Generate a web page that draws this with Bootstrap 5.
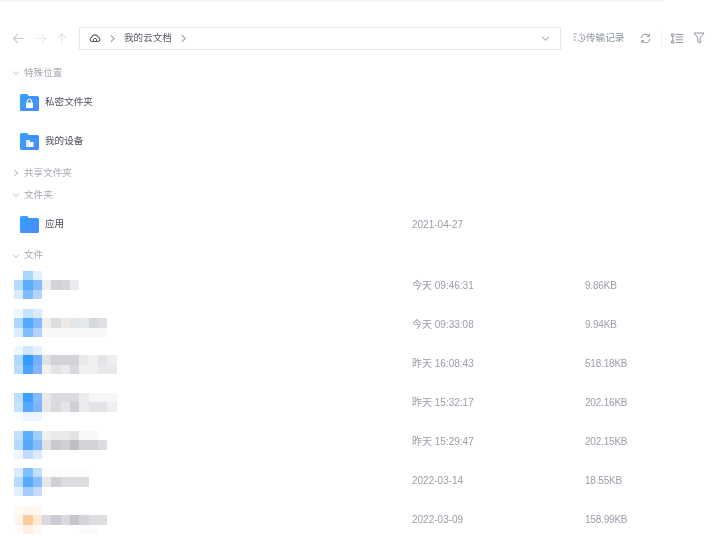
<!DOCTYPE html>
<html lang="zh">
<head>
<meta charset="utf-8">
<title>我的云文档</title>
<link href="https://cdn.jsdelivr.net/npm/bootstrap@5.3.0/dist/css/bootstrap.min.css" rel="stylesheet">
<style>
html,body{height:535px;overflow:hidden;background:#fff}
body{font-family:"Liberation Sans","Noto Sans CJK SC",sans-serif;font-size:10px;color:#9a9ea9}
.fm-page{filter:blur(.55px);width:713px}
.fm-topline{height:3px;width:663px;background:linear-gradient(#f1f1f3,#fff)}
.fm-toolbar{height:59px;padding:24px 0 0 12px;align-items:flex-start}
.fm-nav{width:67px;height:22px;gap:10px;align-items:center}
.fm-path{width:482px;height:23px;border:1px solid #e6e7ec;padding:0 9px;gap:7px;color:#555a66;font-size:9.6px}
.fm-path .fm-end{margin-left:auto}
.fm-tools{height:22px;align-items:center;margin-left:12px;color:#8d93a0;font-size:9.6px}
.fm-sep{width:1px;height:16px;background:#eeeff2;margin:0 9px 0 10px}
.fm-filter{margin-left:10px}
.fm-head{height:22px;padding-left:12px;gap:4px;color:#a4a8b1;font-size:9.6px}
.fm-head-last{height:21px}
.fm-row{height:39px;padding-left:20px;padding-bottom:2px}
.fm-name{width:392px;gap:6px;color:#4b4f59;font-size:9.6px}
.fm-file{height:39px;padding-left:14px}
.fm-thumb{width:398px}
.fm-up1{margin-bottom:2px}
.fm-up2{margin-bottom:4px}
.fm-up4{margin-bottom:8px}
.fm-down4{margin-top:8px}
.fm-down3{margin-top:6px}
.fm-down1{margin-top:2px}
.fm-date{width:173px}
.fm-size{letter-spacing:-.2px}
.fm-folderdate{width:173px}
</style>
</head>
<body>
<svg width="0" height="0" class="position-absolute">
<defs>
<linearGradient id="fg" x1="0" y1="0" x2="1" y2="1"><stop offset="0" stop-color="#38a3ff"/><stop offset="1" stop-color="#4a88ff"/></linearGradient>
<symbol id="fold" viewBox="0 0 19 17"><path d="M1.5 0H7l2 2h8.5A1.5 1.5 0 0 1 19 3.500V15.500A1.500 1.500 0 0 1 17.500 17H1.500A1.500 1.500 0 0 1 0 15.500V1.500A1.500 1.500 0 0 1 1.500 0Z" fill="url(#fg)"/><path d="M0 4H19" stroke="#1e78e6" stroke-width=".7" opacity=".55"/></symbol>
<symbol id="chd" viewBox="0 0 8 8"><path d="M1 2.500 4 5.500 7 2.500" fill="none" stroke="#b3b7c0" stroke-width="1"/></symbol>
<symbol id="chr" viewBox="0 0 8 8"><path d="M2.500 1 5.500 4 2.500 7" fill="none" stroke="#9fa4ae" stroke-width="1"/></symbol>
</defs>
</svg>
<div class="fm-page">
  <div class="fm-topline"></div>
  <div class="fm-toolbar d-flex">
    <div class="fm-nav d-flex">
      <svg width="13" height="13" viewBox="0 0 13 13"><path d="M12 6.500H1.500M6 2 1.500 6.500 6 11" fill="none" stroke="#c3cbe0" stroke-width="1.100"/></svg>
      <svg width="12" height="13" viewBox="0 0 13 13"><path d="M1 6.500H11.500M7 2l4.500 4.500L7 11" fill="none" stroke="#e6e9f1" stroke-width="1.100"/></svg>
      <svg width="10" height="13" viewBox="0 0 13 13" preserveAspectRatio="none"><path d="M6.500 12V1.500M2 6l4.500-4.500L11 6" fill="none" stroke="#dfe3ec" stroke-width="1.100"/></svg>
    </div>
    <div class="fm-path d-flex align-items-center">
      <svg width="12" height="11" viewBox="0 0 12 11"><path d="M3 8.500A2.200 2.200 0 0 1 2.800 4.200 3.300 3.300 0 0 1 9.100 4.200 2.200 2.200 0 0 1 9 8.500H3" fill="none" stroke="#555a66" stroke-width="1.100"/><path d="M6 5 8 7 6 9 4 7Z" fill="#fff" stroke="#555a66"/></svg>
      <svg width="9" height="9"><use href="#chr"/></svg>
      <span>我的云文档</span>
      <svg width="9" height="9"><use href="#chr"/></svg>
      <svg width="11" height="9" viewBox="0 0 8 8" class="fm-end"><use href="#chd"/></svg>
    </div>
    <div class="fm-tools d-flex">
      <svg width="13" height="12" viewBox="0 0 13 12"><path d="M.5 2H4M.5 5H3M.5 8H3M6 3.500a3.500 3.500 0 1 1-.8 4M8.500 4.500V7H10.500" fill="none" stroke="#8d93a0" stroke-width=".9"/></svg>
      <span>传输记录</span>
      <svg width="11" height="11" viewBox="0 0 11 11" class="ms-3"><path d="M1.200 5A4.300 4.300 0 0 1 9 3M9.800 6A4.300 4.300 0 0 1 2 8M9.300.8V3.300H6.900M1.700 10.200V7.700H4.100" fill="none" stroke="#858b98" stroke-width=".9"/></svg>
      <span class="fm-sep"></span>
      <svg width="12" height="11" viewBox="0 0 12 11"><path d="M.6.900h2.200v2.200H.6zM.6 7.900h2.200v2.200H.6zM4.500 1.500H12M4.500 4H12M4.500 6.800H12M4.500 9.500H12M1.700 3.100v4.800" fill="none" stroke="#858b98" stroke-width=".9"/></svg>
      <svg width="12" height="12" viewBox="0 0 12 12" class="fm-filter"><path d="M1 1H11L7.200 6V11L4.800 9.600V6Z" fill="none" stroke="#858b98" stroke-width=".9"/></svg>
    </div>
  </div>

  <div class="fm-head d-flex align-items-center"><svg width="8" height="8"><use href="#chd"/></svg><span>特殊位置</span></div>
  <div class="fm-row d-flex align-items-center">
    <div class="fm-name d-flex align-items-center">
      <svg width="19" height="17" viewBox="0 0 19 17"><use href="#fold"/><path d="M6 8.500h7v5.500H6z" fill="#fff"/><path d="M7.500 8.500V7a2 2 0 0 1 4 0v1.500" fill="none" stroke="#fff"/></svg><span>私密文件夹</span>
    </div>
  </div>
  <div class="fm-row d-flex align-items-center">
    <div class="fm-name d-flex align-items-center">
      <svg width="19" height="17" viewBox="0 0 19 17"><use href="#fold"/><path d="M6 7h4v7H6z" fill="#dbeaff"/><path d="M9 9h4.500v5H9z" fill="#fff"/></svg><span>我的设备</span>
    </div>
  </div>
  <div class="fm-head d-flex align-items-center"><svg width="8" height="8"><use href="#chr"/></svg><span>共享文件夹</span></div>
  <div class="fm-head d-flex align-items-center"><svg width="8" height="8"><use href="#chd"/></svg><span>文件夹</span></div>
  <div class="fm-row d-flex align-items-center">
    <div class="fm-name d-flex align-items-center">
      <svg width="19" height="17" viewBox="0 0 19 17"><use href="#fold"/></svg><span>应用</span>
    </div>
    <span class="fm-folderdate">2021-04-27</span>
  </div>
  <div class="fm-head fm-head-last d-flex align-items-center"><svg width="8" height="8"><use href="#chd"/></svg><span>文件</span></div>

  <div class="fm-file d-flex align-items-center">
    <div class="fm-thumb fm-up1"><svg width="112" height="28" viewBox="0 0 12 3" shape-rendering="crispEdges" class="d-block">
      <rect x="1" y="0" width="1" height="1" fill="#a9d6ff"/><rect x="2" y="0" width="1" height="1" fill="#e3f1ff"/>
      <rect x="0" y="1" width="1" height="1" fill="#b3daff"/><rect x="1" y="1" width="1" height="1" fill="#5dadff"/><rect x="2" y="1" width="1" height="1" fill="#85bbff"/><rect x="3" y="1" width="1" height="1" fill="#eeeeef"/><rect x="4" y="1" width="1" height="1" fill="#d2d3d7"/><rect x="5" y="1" width="1" height="1" fill="#d6d7da"/><rect x="6" y="1" width="1" height="1" fill="#eaebed"/>
      <rect x="0" y="2" width="1" height="1" fill="#d8ebff"/><rect x="1" y="2" width="1" height="1" fill="#7dbcff"/><rect x="2" y="2" width="1" height="1" fill="#b5d3ff"/>
    </svg></div>
    <span class="fm-date">今天 09:46:31</span><span class="fm-size">9.86KB</span>
  </div>
  <div class="fm-file d-flex align-items-center">
    <div class="fm-thumb fm-up2"><svg width="112" height="28" viewBox="0 0 12 3" shape-rendering="crispEdges" class="d-block">
      <rect x="0" y="0" width="1" height="1" fill="#eef6ff"/><rect x="1" y="0" width="1" height="1" fill="#c5e3ff"/><rect x="2" y="0" width="1" height="1" fill="#d8ebff"/>
      <rect x="0" y="1" width="1" height="1" fill="#aed7ff"/><rect x="1" y="1" width="1" height="1" fill="#55a8ff"/><rect x="2" y="1" width="1" height="1" fill="#82bbff"/><rect x="3" y="1" width="1" height="1" fill="#eeeeef"/><rect x="4" y="1" width="1" height="1" fill="#dcdde0"/><rect x="5" y="1" width="1" height="1" fill="#ece8e6"/><rect x="6" y="1" width="1" height="1" fill="#e3e5e9"/><rect x="7" y="1" width="1" height="1" fill="#e7e8ea"/><rect x="8" y="1" width="1" height="1" fill="#d5d8dc"/><rect x="9" y="1" width="1" height="1" fill="#dfe0e3"/>
      <rect x="0" y="2" width="1" height="1" fill="#d8ebff"/><rect x="1" y="2" width="1" height="1" fill="#7cbcff"/><rect x="2" y="2" width="1" height="1" fill="#b2d2ff"/><rect x="3" y="2" width="7" height="1" fill="#f8f8f8"/>
    </svg></div>
    <span class="fm-date">今天 09:33:08</span><span class="fm-size">9.94KB</span>
  </div>
  <div class="fm-file d-flex align-items-center">
    <div class="fm-thumb fm-up4"><svg width="112" height="28" viewBox="0 0 12 3" shape-rendering="crispEdges" class="d-block">
      <rect x="0" y="0" width="1" height="1" fill="#eef6ff"/><rect x="1" y="0" width="1" height="1" fill="#cfe7ff"/><rect x="2" y="0" width="1" height="1" fill="#e3f0ff"/>
      <rect x="0" y="1" width="1" height="1" fill="#b0d9ff"/><rect x="1" y="1" width="1" height="1" fill="#359cff"/><rect x="2" y="1" width="1" height="1" fill="#72b1ff"/><rect x="3" y="1" width="1" height="1" fill="#dfe0e2"/><rect x="4" y="1" width="3" height="1" fill="#d2d3d7"/><rect x="7" y="1" width="1" height="1" fill="#e9eaec"/><rect x="8" y="1" width="1" height="1" fill="#eff0f1"/><rect x="9" y="1" width="1" height="1" fill="#e3e4e7"/><rect x="10" y="1" width="1" height="1" fill="#eeeeef"/>
      <rect x="0" y="2" width="1" height="1" fill="#b9dcff"/><rect x="1" y="2" width="1" height="1" fill="#4ea3ff"/><rect x="2" y="2" width="1" height="1" fill="#82b5ff"/><rect x="3" y="2" width="1" height="1" fill="#f2f2f2"/><rect x="4" y="2" width="1" height="1" fill="#e3e4e6"/><rect x="5" y="2" width="1" height="1" fill="#ebebed"/><rect x="6" y="2" width="1" height="1" fill="#d8d9dc"/><rect x="7" y="2" width="2" height="1" fill="#f0f1f2"/><rect x="9" y="2" width="2" height="1" fill="#e8e9eb"/>
    </svg></div>
    <span class="fm-date">昨天 16:08:43</span><span class="fm-size">518.18KB</span>
  </div>
  <div class="fm-file d-flex align-items-center">
    <div class="fm-thumb fm-down4"><svg width="112" height="28" viewBox="0 0 12 3" shape-rendering="crispEdges" class="d-block">
      <rect x="0" y="0" width="1" height="1" fill="#bcdfff"/><rect x="1" y="0" width="1" height="1" fill="#3e9fff"/><rect x="2" y="0" width="1" height="1" fill="#82bcff"/><rect x="3" y="0" width="1" height="1" fill="#e7e8ea"/><rect x="4" y="0" width="3" height="1" fill="#dadbde"/><rect x="7" y="0" width="1" height="1" fill="#eaebed"/><rect x="8" y="0" width="3" height="1" fill="#f5f6f7"/>
      <rect x="0" y="1" width="1" height="1" fill="#c5e2ff"/><rect x="1" y="1" width="1" height="1" fill="#58a8ff"/><rect x="2" y="1" width="1" height="1" fill="#7fb3ff"/><rect x="3" y="1" width="1" height="1" fill="#e6e7e8"/><rect x="4" y="1" width="1" height="1" fill="#d9dadd"/><rect x="5" y="1" width="1" height="1" fill="#e4e5e7"/><rect x="6" y="1" width="1" height="1" fill="#cfd0d5"/><rect x="7" y="1" width="1" height="1" fill="#ebecee"/><rect x="8" y="1" width="2" height="1" fill="#e3e4e8"/><rect x="10" y="1" width="1" height="1" fill="#eeeff0"/>
      <rect x="0" y="2" width="1" height="1" fill="#fafcff"/><rect x="1" y="2" width="2" height="1" fill="#edf4ff"/>
    </svg></div>
    <span class="fm-date">昨天 15:32:17</span><span class="fm-size">202.16KB</span>
  </div>
  <div class="fm-file d-flex align-items-center">
    <div class="fm-thumb fm-down3"><svg width="112" height="28" viewBox="0 0 12 3" shape-rendering="crispEdges" class="d-block">
      <rect x="0" y="0" width="1" height="1" fill="#c1e1ff"/><rect x="1" y="0" width="1" height="1" fill="#5caeff"/><rect x="2" y="0" width="1" height="1" fill="#a1cfff"/><rect x="3" y="0" width="1" height="1" fill="#f1f1f2"/><rect x="4" y="0" width="2" height="1" fill="#e9eaeb"/><rect x="6" y="0" width="1" height="1" fill="#e2e3e5"/><rect x="7" y="0" width="2" height="1" fill="#f8f8f9"/>
      <rect x="0" y="1" width="1" height="1" fill="#b5dbff"/><rect x="1" y="1" width="1" height="1" fill="#57a8ff"/><rect x="2" y="1" width="1" height="1" fill="#85bbff"/><rect x="3" y="1" width="1" height="1" fill="#e0e1e3"/><rect x="4" y="1" width="1" height="1" fill="#c9cace"/><rect x="5" y="1" width="1" height="1" fill="#d0d1d5"/><rect x="6" y="1" width="1" height="1" fill="#bebfc5"/><rect x="7" y="1" width="2" height="1" fill="#d3d4d8"/><rect x="9" y="1" width="1" height="1" fill="#dcdde0"/>
      <rect x="0" y="2" width="1" height="1" fill="#eef6ff"/><rect x="1" y="2" width="1" height="1" fill="#c0dbff"/><rect x="2" y="2" width="1" height="1" fill="#dde9ff"/>
    </svg></div>
    <span class="fm-date">昨天 15:29:47</span><span class="fm-size">202.15KB</span>
  </div>
  <div class="fm-file d-flex align-items-center">
    <div class="fm-thumb fm-down1"><svg width="112" height="28" viewBox="0 0 12 3" shape-rendering="crispEdges" class="d-block">
      <rect x="0" y="0" width="1" height="1" fill="#d8ecff"/><rect x="1" y="0" width="1" height="1" fill="#7cc0ff"/><rect x="2" y="0" width="1" height="1" fill="#c0dfff"/><rect x="3" y="0" width="5" height="1" fill="#fcfcfc"/>
      <rect x="0" y="1" width="1" height="1" fill="#b5dbff"/><rect x="1" y="1" width="1" height="1" fill="#59a9ff"/><rect x="2" y="1" width="1" height="1" fill="#8abdff"/><rect x="3" y="1" width="1" height="1" fill="#e6e7e9"/><rect x="4" y="1" width="1" height="1" fill="#d0d1d5"/><rect x="5" y="1" width="3" height="1" fill="#dcdde0"/>
      <rect x="0" y="2" width="1" height="1" fill="#e3f0ff"/><rect x="1" y="2" width="1" height="1" fill="#a2cbff"/><rect x="2" y="2" width="1" height="1" fill="#c5dcff"/>
    </svg></div>
    <span class="fm-date">2022-03-14</span><span class="fm-size">18.55KB</span>
  </div>
  <div class="fm-file d-flex align-items-center">
    <div class="fm-thumb"><svg width="112" height="28" viewBox="0 0 12 3" shape-rendering="crispEdges" class="d-block">
      <rect x="0" y="0" width="1" height="1" fill="#fffaf6"/><rect x="1" y="0" width="2" height="1" fill="#fff6ee"/>
      <rect x="0" y="1" width="1" height="1" fill="#fff3ea"/><rect x="1" y="1" width="1" height="1" fill="#fecb9b"/><rect x="2" y="1" width="1" height="1" fill="#ffe9d6"/><rect x="3" y="1" width="1" height="1" fill="#d8d9dd"/><rect x="4" y="1" width="1" height="1" fill="#c9cdd3"/><rect x="5" y="1" width="1" height="1" fill="#d7d9dc"/><rect x="6" y="1" width="1" height="1" fill="#c5c7cd"/><rect x="7" y="1" width="1" height="1" fill="#d2d5da"/><rect x="8" y="1" width="2" height="1" fill="#dcdde0"/>
      <rect x="0" y="2" width="1" height="1" fill="#fffcf9"/><rect x="1" y="2" width="1" height="1" fill="#fff0e3"/><rect x="2" y="2" width="1" height="1" fill="#fff8f2"/><rect x="7" y="2" width="2" height="1" fill="#fbfbfb"/>
    </svg></div>
    <span class="fm-date">2022-03-09</span><span class="fm-size">158.99KB</span>
  </div>
</div>
<script src="https://cdn.jsdelivr.net/npm/bootstrap@5.3.0/dist/js/bootstrap.bundle.min.js"></script>
</body>
</html>
